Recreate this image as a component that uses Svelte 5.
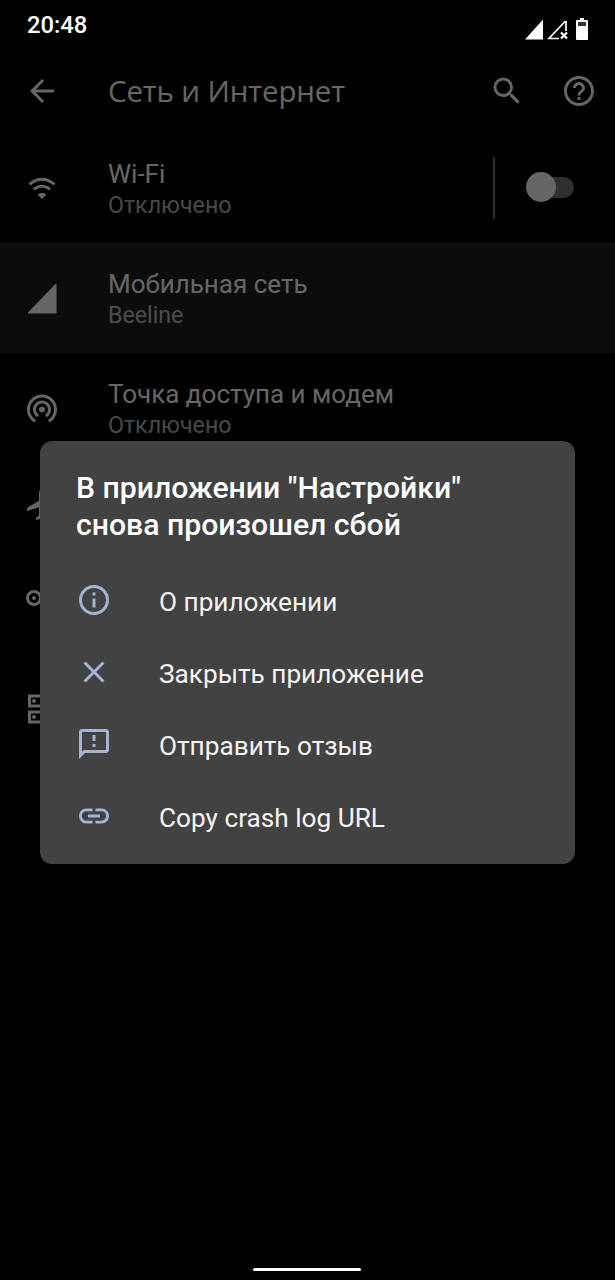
<script>
	const actions = ["О приложении", "Закрыть приложение", "Отправить отзыв", "Copy crash log URL"];
</script>

<div class="screen">
	<header class="status">
		<span class="time">20:48</span>
		<div class="status-icons">
			<svg width="24" height="24" viewBox="0 0 24 24"><path d="M21 2.5v20H3z" fill="#fff" /></svg>
			<svg width="24" height="24" viewBox="0 0 24 24">
				<path d="M20 4v10M13 21.5H3L19.500 4" fill="none" stroke="#fff" stroke-width="1.7" />
				<path d="M15 15.5l6 6M21 15.5l-6 6" stroke="#fff" stroke-width="2.2" />
			</svg>
			<svg class="battery" width="12" height="22" viewBox="0 0 12 22">
				<path d="M4 0h4v2h3a1 1 0 0 1 1 1v18a1 1 0 0 1-1 1H1a1 1 0 0 1-1-1V3a1 1 0 0 1 1-1h3z" fill="#fff" />
				<rect x="2" y="4" width="8" height="4" fill="#333" />
			</svg>
		</div>
	</header>

	<div class="toolbar">
		<svg class="back" width="36" height="36" viewBox="0 0 24 24"><path d="M20 11H7.83l5.59-5.59L12 4l-8 8 8 8 1.41-1.41L7.83 13H20z" fill="#fff" /></svg>
		<h1>Сеть и Интернет</h1>
		<svg class="search" width="36" height="36" viewBox="0 0 24 24"><path d="M15.5 14h-.79l-.28-.27A6.47 6.47 0 0 0 16 9.5 6.5 6.5 0 1 0 9.5 16c1.61 0 3.09-.59 4.23-1.57l.27.28v.79l5 4.99L20.49 19l-4.99-5zm-6 0C7.01 14 5 11.99 5 9.5S7.01 5 9.5 5 14 7.01 14 9.5 11.99 14 9.5 14z" fill="#fff" /></svg>
		<svg class="help" width="36" height="36" viewBox="0 0 24 24"><path d="M11 18h2v-2h-2v2zm1-16C6.48 2 2 6.48 2 12s4.48 10 10 10 10-4.48 10-10S17.52 2 12 2zm0 18c-4.41 0-8-3.59-8-8s3.59-8 8-8 8 3.59 8 8-3.59 8-8 8zm0-14c-2.21 0-4 1.79-4 4h2c0-1.1.9-2 2-2s2 .9 2 2c0 2-3 1.75-3 5h2c0-2.25 3-2.5 3-5 0-2.21-1.79-4-4-4z" fill="#fff" /></svg>
	</div>

	<div class="row">
		<svg class="row-icon" width="36" height="36" viewBox="0 0 36 36">
			<g fill="none" stroke="#fff" stroke-width="3">
				<path d="M5.5 14.5C13 7.5 23 7.5 30.5 14.5" />
				<path d="M10 19.5C15 15 21 15 26 19.5" />
			</g>
			<path d="M13.5 24.5C16 22.5 20 22.5 22.5 24.5L18 29z" fill="#fff" />
		</svg>
		<div class="row-text">
			<div class="row-title">Wi-Fi</div>
			<div class="row-sub">Отключено</div>
		</div>
		<div class="wifi-switch">
			<div class="track"></div>
			<div class="thumb"></div>
		</div>
	</div>

	<div class="row selected">
		<svg class="row-icon" width="36" height="36" viewBox="0 0 36 36"><path d="M32 4v29H4z" fill="#fff" stroke="#fff" stroke-linejoin="round" /></svg>
		<div class="row-text">
			<div class="row-title">Мобильная сеть</div>
			<div class="row-sub">Beeline</div>
		</div>
	</div>

	<div class="row">
		<svg class="row-icon" width="36" height="36" viewBox="0 0 24 24"><path d="M12 11c-1.1 0-2 .9-2 2s.9 2 2 2 2-.9 2-2-.9-2-2-2zm6 2c0-3.31-2.69-6-6-6s-6 2.69-6 6c0 2.22 1.21 4.15 3 5.19l1-1.74c-1.19-.7-2-1.97-2-3.45 0-2.21 1.79-4 4-4s4 1.79 4 4c0 1.48-.81 2.75-2 3.45l1 1.74c1.79-1.04 3-2.97 3-5.19zM12 3C6.48 3 2 7.48 2 13c0 3.7 2.01 6.92 4.99 8.65l1-1.73C5.61 18.53 4 15.96 4 13c0-4.42 3.58-8 8-8s8 3.58 8 8c0 2.96-1.61 5.53-4 6.92l1 1.73c2.99-1.73 5-4.95 5-8.65 0-5.52-4.48-10-10-10z" fill="#fff" /></svg>
		<div class="row-text">
			<div class="row-title">Точка доступа и модем</div>
			<div class="row-sub">Отключено</div>
		</div>
	</div>

	<div class="row airplane">
		<svg class="row-icon" width="36" height="36" viewBox="0 0 24 24"><path d="M21 16v-2l-8-5V3.5c0-.83-.67-1.5-1.5-1.5S10 2.67 10 3.5V9l-8 5v2l8-2.5V19l-2 1.5V22l3.5-1 3.5 1v-1.5L13 19v-5.5l8 2.5z" fill="#fff" /></svg>
	</div>

	<div class="row vpn">
		<svg class="row-icon" width="36" height="36" viewBox="0 0 36 36">
			<circle cx="10" cy="18" r="6.5" fill="none" stroke="#fff" stroke-width="3" />
			<circle cx="10" cy="18" r="2" fill="#fff" />
		</svg>
	</div>

	<div class="row data">
		<svg class="row-icon" width="36" height="36" viewBox="0 0 36 36">
			<g fill="none" stroke="#fff" stroke-width="3">
				<rect x="5.5" y="6" width="24" height="10" />
				<rect x="5.5" y="22" width="24" height="10" />
			</g>
			<rect x="8.25" y="9.25" width="3.5" height="3.5" fill="#fff" />
			<rect x="8.25" y="25.25" width="3.5" height="3.5" fill="#fff" />
		</svg>
	</div>

	<div class="scrim"></div>

	<div class="dialog">
		<h2>В приложении "Настройки"<br />снова произошел сбой</h2>
		<ul>
			{#each actions as label, i}
				<li>
					<span class="action-icon">
						{#if i === 0}
							<svg width="36" height="36" viewBox="0 0 24 24"><path d="M11 7h2v2h-2zm0 4h2v6h-2zm1-9C6.48 2 2 6.48 2 12s4.48 10 10 10 10-4.48 10-10S17.52 2 12 2zm0 18c-4.41 0-8-3.59-8-8s3.59-8 8-8 8 3.59 8 8-3.59 8-8 8z" /></svg>
						{:else if i === 1}
							<svg width="36" height="36" viewBox="0 0 24 24"><path d="M19 6.41L17.59 5 12 10.59 6.41 5 5 6.41 10.59 12 5 17.59 6.41 19 12 13.41 17.59 19 19 17.59 13.41 12z" /></svg>
						{:else if i === 2}
							<svg width="36" height="36" viewBox="0 0 24 24"><path d="M20 2H4c-1.1 0-2 .9-2 2v18l4-4h14c1.1 0 2-.9 2-2V4c0-1.1-.9-2-2-2zm0 14H5.17L4 17.17V4h16v12zM11 12h2v2h-2zm0-6h2v4h-2z" /></svg>
						{:else}
							<svg width="36" height="36" viewBox="0 0 24 24"><path d="M3.9 12c0-1.71 1.39-3.1 3.1-3.1h4V7H7c-2.76 0-5 2.24-5 5s2.24 5 5 5h4v-1.9H7c-1.71 0-3.1-1.39-3.1-3.1zM8 13h8v-2H8v2zm9-6h-4v1.9h4c1.71 0 3.1 1.39 3.1 3.1s-1.39 3.1-3.1 3.1h-4V17h4c2.76 0 5-2.24 5-5s-2.24-5-5-5z" /></svg>
						{/if}
					</span>
					<span class="action-label">{label}</span>
				</li>
			{/each}
		</ul>
	</div>

	<div class="nav-pill"></div>
</div>

<style>
	:global(body) {
		background: #000;
	}
	.screen {
		position: relative;
		display: flex;
		flex-direction: column;
		width: 615px;
		height: 1280px;
		overflow: hidden;
		background: #000;
		color: #fff;
		font-family: Roboto, sans-serif;
	}
	.status {
		display: flex;
		align-items: center;
		justify-content: space-between;
		flex: none;
		height: 48px;
		padding: 0 27px;
		box-sizing: border-box;
	}
	.time {
		position: relative;
		z-index: 3;
		margin-top: 2px;
		font-size: 23.8px;
		font-weight: 500;
	}
	.status-icons {
		position: relative;
		z-index: 3;
		display: flex;
		align-items: center;
		margin-top: 9px;
	}
	.battery {
		margin-left: 6px;
	}
	.toolbar {
		display: flex;
		align-items: center;
		flex: none;
		height: 85px;
		padding: 0 18px 0 24px;
		box-sizing: border-box;
	}
	h1 {
		flex: 1;
		margin: 0 0 0 48px;
		font-family: "Open Sans", Roboto, sans-serif;
		font-size: 29.5px;
		font-weight: 500;
		letter-spacing: -0.15px;
	}
	.search {
		margin-right: 36px;
	}
	.row {
		display: flex;
		align-items: center;
		flex: none;
		height: 110px;
		padding: 0 0 0 24px;
		box-sizing: border-box;
	}
	.row.airplane {
		height: 84px;
	}
	.row.vpn {
		height: 102px;
	}
	.row.data {
		height: 118px;
	}
	.row.selected {
		background: #1f1f1f;
	}
	.row-icon {
		flex: none;
	}
	.row-text {
		flex: 1;
		margin-left: 48px;
		margin-top: 1px;
	}
	.row-title {
		font-size: 26px;
		line-height: 32px;
	}
	.row-sub {
		margin-top: 1px;
		font-size: 23.2px;
		line-height: 29px;
		opacity: 0.7;
	}
	.wifi-switch {
		position: relative;
		flex: none;
		width: 122px;
		height: 62px;
		border-left: 2px solid #777;
		box-sizing: border-box;
	}
	.track {
		position: absolute;
		left: 38px;
		top: 20px;
		width: 41px;
		height: 21px;
		border-radius: 11px;
		background: #777;
	}
	.thumb {
		position: absolute;
		left: 31px;
		top: 15px;
		width: 30px;
		height: 30px;
		border-radius: 50%;
		background: #fff;
	}
	.scrim {
		position: absolute;
		inset: 0;
		background: rgba(0, 0, 0, 0.6);
	}
	.dialog {
		position: absolute;
		left: 40px;
		top: 441px;
		width: 535px;
		height: 423px;
		padding: 28px 36px 0;
		box-sizing: border-box;
		border-radius: 12px;
		background: #424242;
	}
	h2 {
		margin: 0;
		font-size: 30.2px;
		font-weight: 500;
		line-height: 37px;
	}
	ul {
		margin: 22px 0 0;
		padding: 0;
		list-style: none;
	}
	li {
		display: flex;
		align-items: center;
		height: 72px;
		font-size: 26.2px;
		color: #f4f4f4;
	}
	.action-icon {
		display: flex;
		flex: none;
		width: 84px;
		margin-top: -2px;
		margin-left: -1px;
		margin-right: 1px;
	}
	.action-icon svg {
		fill: #a4b4d4;
		margin-left: 1px;
	}
	.action-label {
		margin-top: 2px;
		margin-left: -1px;
	}
	.nav-pill {
		position: absolute;
		left: 253px;
		bottom: 9px;
		width: 108px;
		height: 3px;
		border-radius: 2px;
		background: #fff;
	}
</style>
